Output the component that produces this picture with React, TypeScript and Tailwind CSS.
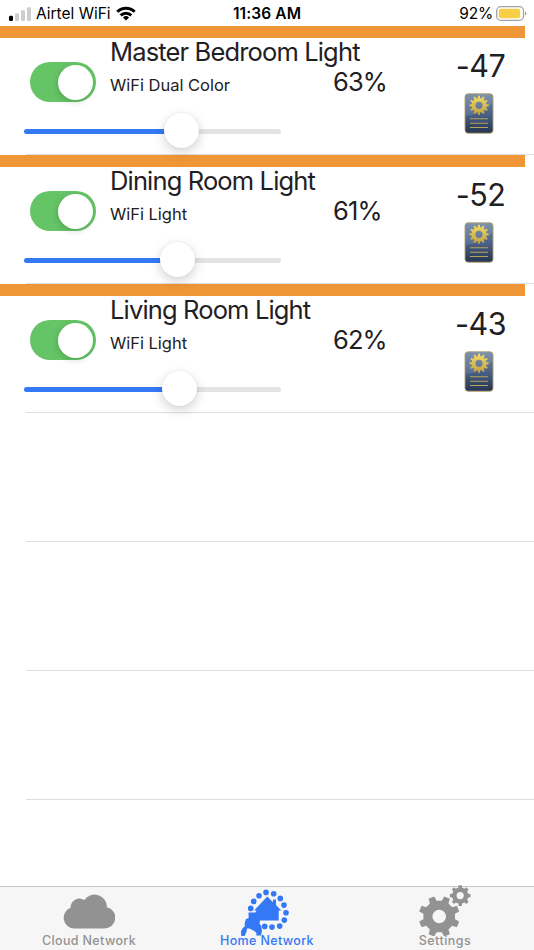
import React, { useState } from 'react';

interface Light {
  id: number;
  name: string;
  type: string;
  level: number;
  thumb: number;
  signal: number;
}

const initialLights: Light[] = [
  { id: 1, name: 'Master Bedroom Light', type: 'WiFi Dual Color', level: 63, thumb: 157.5, signal: -47 },
  { id: 2, name: 'Dining Room Light', type: 'WiFi Light', level: 61, thumb: 154, signal: -52 },
  { id: 3, name: 'Living Room Light', type: 'WiFi Light', level: 62, thumb: 156, signal: -43 },
];

const emptyRows = [1, 2, 3];

// Outline of a gear with flat teeth and a round hole
const gearPath = (
  cx: number,
  cy: number,
  outer: number,
  inner: number,
  hole: number,
  teeth: number,
  turn = 0,
  tip = 0.2,
  root = 0.3
) => {
  const step = (Math.PI * 2) / teeth;
  const at = (r: number, a: number) => `${(cx + r * Math.cos(a)).toFixed(2)} ${(cy + r * Math.sin(a)).toFixed(2)}`;
  const points: string[] = [];
  for (let i = 0; i < teeth; i++) {
    const a = i * step + turn;
    points.push(at(inner, a - step * root), at(outer, a - step * tip), at(outer, a + step * tip), at(inner, a + step * root));
  }
  return `M${points.join('L')}ZM${cx - hole} ${cy}a${hole} ${hole} 0 1 0 ${hole * 2} 0a${hole} ${hole} 0 1 0 ${-hole * 2} 0Z`;
};

function SignalIcon() {
  return (
    <svg className="w-[22px] h-[14px]" viewBox="0 0 22 14">
      <rect x="0" y="8.8" width="4" height="5.2" rx="1.2" fill="#000" />
      <rect x="6" y="6.2" width="4" height="7.8" rx="1.2" fill="#cdcdcd" />
      <rect x="12" y="3.2" width="4" height="10.8" rx="1.2" fill="#cdcdcd" />
      <rect x="18" y="0.2" width="4" height="13.8" rx="1.2" fill="#cdcdcd" />
    </svg>
  );
}

function WifiIcon() {
  return (
    <svg className="w-5 h-[15px]" viewBox="0 0 20 15" fill="none" stroke="#000" strokeWidth="3">
      <path d="M1.3 5.7a12.4 12.4 0 0 1 17.4 0" />
      <path d="M4.7 9.3a7.6 7.6 0 0 1 10.6 0" />
      <path d="M10 14.6l-3-3.1a4.3 4.3 0 0 1 6 0z" fill="#000" stroke="none" />
    </svg>
  );
}

function BatteryIcon() {
  return (
    <svg className="w-[31px] h-[15px]" viewBox="0 0 31 15">
      <rect x="0.7" y="0.7" width="26.8" height="13.6" rx="4" fill="#fff" stroke="#a3a3a3" strokeWidth="1.3" />
      <rect x="2.8" y="2.7" width="21.4" height="9.6" rx="2" fill="#f7ce46" />
      <path d="M29 5.2a2.6 2.6 0 0 1 0 4.6z" fill="#a3a3a3" />
    </svg>
  );
}

function DeviceIcon() {
  return (
    <svg className="w-[30px] h-[41px]" viewBox="0 0 30 41">
      <defs>
        <linearGradient id="device-body" x1="0" y1="0" x2="0" y2="1">
          <stop offset="0" stopColor="#6f86a4" />
          <stop offset="0.5" stopColor="#4a628a" />
          <stop offset="1" stopColor="#263450" />
        </linearGradient>
        <linearGradient id="device-gold" x1="0" y1="0" x2="0" y2="1">
          <stop offset="0" stopColor="#f4dc62" />
          <stop offset="1" stopColor="#c0a142" />
        </linearGradient>
      </defs>
      <rect x="1" y="0.8" width="28" height="39.4" rx="3" fill="url(#device-body)" stroke="#b3a06a" strokeWidth="0.9" />
      <path d="M1.5 23C12 22 22 18 28.5 10V4Q28.5 1.3 26 1.3H4Q1.5 1.3 1.5 4Z" fill="#fff" opacity="0.1" />
      <path d={gearPath(15, 12.3, 9.6, 7.4, 3.6, 12, 0, 0.2, 0.28)} fill="url(#device-gold)" fillRule="evenodd" />
      <path d="M6 25.7h18M6 30.2h18M6 34.5h18" stroke="#b6a35b" strokeWidth="1.1" />
    </svg>
  );
}

function CloudIcon() {
  return (
    <svg className="w-[52px] h-[35px]" viewBox="0 0 52 35" fill="#929292">
      <path d="M11.3 34.5A10.7 10.7 0 0 1 7.6 13.8A8.8 8.8 0 0 1 21.3 6.1A12.4 12.4 0 0 1 44 13.2A10.8 10.8 0 0 1 41 34.5Z" />
    </svg>
  );
}

const dots = [
  [10.7, 18.8], [13.7, 11.8], [19, 6.2], [26, 2.8], [33.7, 4.2], [40.3, 8.8],
  [44, 15.5], [46, 23.2], [44.3, 30.5], [39.7, 36.5], [32, 37.5], [24.7, 36.8],
];

function HomeIcon() {
  return (
    <svg className="w-[50px] h-[48px]" viewBox="0 -0.6 50 48" fill="#3478f6">
      {dots.map(([x, y]) => (
        <circle key={x} cx={x} cy={y} r="2.8" />
      ))}
      <path d="M27.3 7L33 12.6V10H36V15.4L41.3 20.8H38.7V31H20L19.5 34.2L21.2 36.2L22 41.5L21 46H16.2L16.6 43.8L14.8 41.6L9.5 39L7 39L6.6 41.8L4.6 46.5H1.2L1 41.7L3 38.2L4.8 36.8L4.7 33.5L6 29.3L8.7 28.3L8.5 23L15.5 22.8L16.5 20.8H14Z" />
    </svg>
  );
}

function SettingsIcon() {
  return (
    <svg className="w-[52px] h-[52px]" viewBox="0 0 52 52" fill="#929292" fillRule="evenodd">
      <path d={gearPath(20.2, 32.5, 20.6, 16, 6.8, 8, Math.PI / 8, 0.19, 0.29)} />
      <path d={gearPath(41.2, 11.6, 10.4, 8.2, 3.6, 8, 0, 0.19, 0.29)} />
    </svg>
  );
}

function StatusBar() {
  return (
    <header className="h-[27px] -mb-px shrink-0 grid grid-cols-3 items-center text-black text-[15.5px] pl-[9px] pr-[7px]">
      <div className="flex items-center">
        <SignalIcon />
        <span className="ml-[5px] mr-[5px] pt-px whitespace-nowrap">Airtel WiFi</span>
        <WifiIcon />
      </div>
      <span className="text-center font-semibold pt-px tracking-[0.1px] -ml-[2px]">11:36 AM</span>
      <div className="flex items-center justify-end gap-[3px]">
        <span className="tracking-[-0.2px] pt-px">92%</span>
        <BatteryIcon />
      </div>
    </header>
  );
}

function LightRow({ light }: { light: Light }) {
  const [on, setOn] = useState(true);

  return (
    <li className="h-[129px] flex flex-col">
      <div className="h-3 w-[525px] bg-[#ef9736] shrink-0" />
      <div className="flex-1 flex">
        <div className="w-[425px]">
          <div className="flex h-[75px] pl-[30px]">
            <button
              onClick={() => setOn(!on)}
              className={`mt-6 w-[66px] h-10 rounded-full py-[2.5px] px-[3px] flex shrink-0 ${
                on ? 'bg-[#65c466] justify-end' : 'bg-gray-200 justify-start'
              }`}
            >
              <span className="size-[35px] rounded-full bg-white shadow-[-1px_2px_6px_rgba(0,0,0,0.16)]" />
            </button>
            <div className="ml-[14px] flex-1">
              <h2 className="h-[28px] leading-[28px] text-[25.5px] font-[380] tracking-[-0.85px] whitespace-nowrap">{light.name}</h2>
              <div className="flex items-center h-[31px]">
                <span className="w-[223px] pt-[8px] text-[16.5px] font-[380] tracking-[-0.02px]">{light.type}</span>
                <span className="pt-[2px] text-[25.5px] font-[380] tracking-[-0.9px]">{light.level}%</span>
              </div>
            </div>
          </div>
          <div className="ml-6 w-[257px] h-[35px] flex items-center">
            <div className="h-[5px] rounded-l-full bg-[#3478f6] mt-[2px]" style={{ width: light.thumb - 17 }} />
            <div className="size-[35px] shrink-0 -mx-px z-10 rounded-full bg-white shadow-[0_4px_12px_rgba(0,0,0,0.18),0_0_2px_rgba(0,0,0,0.08)]" />
            <div className="h-[5px] flex-1 rounded-r-full bg-[#e4e4e5] mt-[2px]" />
          </div>
        </div>
        <div className="flex-1 flex flex-col items-center pt-[10px]">
          <span className="ml-[2px] text-[30.5px] leading-9 font-[380] tracking-[-0.5px]">{light.signal}</span>
          <div className="mt-[9px] mr-px">
            <DeviceIcon />
          </div>
        </div>
      </div>
      <div className="ml-[26px] h-px bg-[#dedee0] shrink-0" />
    </li>
  );
}

function TabBar() {
  return (
    <nav className="h-16 shrink-0 grid grid-cols-3 bg-[#f6f6f6] border-t border-[#c9c9c9] text-[#929292] text-[12.5px] font-medium tracking-[0.36px]">
      <button className="flex flex-col items-center pt-[7px]">
        <CloudIcon />
        <span className="mt-[4px] leading-4">Cloud Network</span>
      </button>
      <button className="flex flex-col items-center pt-[2px] text-[#3478f6]">
        <span className="mr-1">
          <HomeIcon />
        </span>
        <span className="-mt-[4px] leading-4 z-10">Home Network</span>
      </button>
      <button className="flex flex-col items-center">
        <span className="-mt-[3px]">
          <SettingsIcon />
        </span>
        <span className="-mt-[3px] leading-4 z-10 tracking-[0.5px]">Settings</span>
      </button>
    </nav>
  );
}

function App() {
  const [lights] = useState<Light[]>(initialLights);

  return (
    <div className="w-[534px] h-[950px] overflow-hidden bg-white flex flex-col text-[#1f2024] font-['Inter','Liberation_Sans',sans-serif]">
      <StatusBar />
      <ul className="flex-1">
        {lights.map(light => (
          <LightRow key={light.id} light={light} />
        ))}
        {emptyRows.map(row => (
          <li key={row} className="h-[129px] ml-[26px] border-b border-[#dedee0]" />
        ))}
      </ul>
      <TabBar />
    </div>
  );
}

export default App;
